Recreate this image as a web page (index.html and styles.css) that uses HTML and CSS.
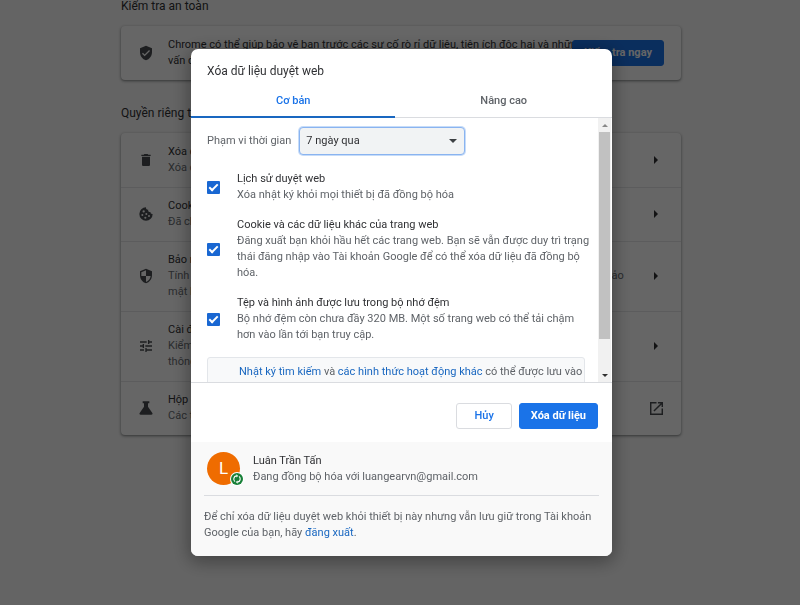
FILE: index.html
```html
<!DOCTYPE html>
<html lang="vi">
<head>
<meta charset="utf-8">
<meta name="viewport" content="width=device-width, initial-scale=1">
<title>Xóa dữ liệu duyệt web</title>
<link rel="stylesheet" href="styles.css">
</head>
<body>
<main class="page">
  <h2 class="section-title">Kiểm tra an toàn</h2>
  <section class="card">
    <div class="row">
      <svg class="row-icon" viewBox="0 0 24 24"><path d="M12 1 3 5v6c0 5.550 3.840 10.740 9 12 5.160-1.260 9-6.450 9-12V5l-9-4zm-2 16-4-4 1.410-1.410L10 14.170l6.590-6.590L18 9l-8 8z"/></svg>
      <p class="row-text">Chrome có thể giúp bảo vệ bạn trước các sự cố rò rỉ dữ liệu, tiện ích độc hại và những<br>vấn đề bảo mật khác</p>
      <button class="button primary" type="button">Kiểm tra ngay</button>
    </div>
  </section>

  <h2 class="section-title">Quyền riêng tư và bảo mật</h2>
  <section class="card">
    <div class="row">
      <svg class="row-icon" viewBox="0 0 24 24"><path d="M6 19c0 1.100.9 2 2 2h8c1.100 0 2-.9 2-2V7H6v12zM19 4h-3.500l-1-1h-5l-1 1H5v2h14V4z"/></svg>
      <p class="row-text">Xóa dữ liệu duyệt web<br><span class="muted">Xóa cookie, bộ nhớ đệm và nội dung khác</span></p>
      <svg class="arrow" viewBox="0 0 5 10"><path d="M0 0l5 5-5 5z"/></svg>
    </div>
    <div class="row">
      <svg class="row-icon" viewBox="0 0 24 24"><path fill-rule="evenodd" d="M12 2a10 10 0 1 0 10 10c-2 .4-3.500-1-3.300-2.900-2.300.4-4-1.300-3.400-3.600C13 5.700 11.600 4 12 2zM8.500 6.500a1.700 1.700 0 1 1 0 3.400 1.700 1.700 0 0 1 0-3.400zM6.500 12a1.500 1.500 0 1 1 0 3 1.500 1.500 0 0 1 0-3zM12.500 10.500a1.500 1.500 0 1 1 0 3 1.500 1.500 0 0 1 0-3zM11 16a1.600 1.600 0 1 1 0 3.200 1.600 1.600 0 0 1 0-3.200zM16.500 13.500a1.500 1.500 0 1 1 0 3 1.500 1.500 0 0 1 0-3z"/></svg>
      <p class="row-text">Cookie và các dữ liệu khác của trang web<br><span class="muted">Đã chặn cookie của bên thứ ba ở chế độ Ẩn danh</span></p>
      <svg class="arrow" viewBox="0 0 5 10"><path d="M0 0l5 5-5 5z"/></svg>
    </div>
    <div class="row">
      <svg class="row-icon" viewBox="0 0 24 24"><path d="M12 1 3 5v6c0 5.550 3.840 10.740 9 12 5.160-1.260 9-6.450 9-12V5l-9-4zm0 10.990h7c-.53 4.120-3.280 7.790-7 8.940V12H5V6.300l7-3.110v8.800z"/></svg>
      <p class="row-text">Bảo mật<br><span class="muted">Tính năng Duyệt web an toàn (bảo vệ khỏi các trang web nguy hiểm), các tùy chọn cài đặt bảo<br>mật khác</span></p>
      <svg class="arrow" viewBox="0 0 5 10"><path d="M0 0l5 5-5 5z"/></svg>
    </div>
    <div class="row">
      <svg class="row-icon" viewBox="0 0 24 24"><path d="M3 17v2h6v-2H3zM3 5v2h10V5H3zm10 16v-2h8v-2h-8v-2h-2v6h2zM7 9v2H3v2h4v2h2V9H7zm14 4v-2H11v2h10zm-6-4h2V7h4V5h-4V3h-2v6z"/></svg>
      <p class="row-text">Cài đặt trang web<br><span class="muted">Kiểm soát những thông tin mà các trang web có thể sử dụng và hiển thị (vị trí, máy ảnh và<br>thông tin khác)</span></p>
      <svg class="arrow" viewBox="0 0 5 10"><path d="M0 0l5 5-5 5z"/></svg>
    </div>
    <div class="row">
      <svg class="row-icon" viewBox="0 0 24 24"><path d="M7 2h10v3h-2v5l6.500 9.500c.8 1.300 0 2.500-1.500 2.500H4c-1.500 0-2.300-1.200-1.500-2.500L9 10V5H7z"/></svg>
      <p class="row-text">Hộp cát về quyền riêng tư<br><span class="muted">Các tính năng dùng thử đang bật</span></p>
      <svg class="external" viewBox="0 0 18 18"><path d="M16 16H2V2h7V0H0v18h18V9h-2v7zM11 0v2h3.590l-9.830 9.830 1.410 1.410L16 3.410V7h2V0h-7z"/></svg>
    </div>
  </section>
</main>

<div class="backdrop">
  <div class="dialog" role="dialog" aria-modal="true" aria-labelledby="dialog-title">
    <h1 class="dialog-title" id="dialog-title">Xóa dữ liệu duyệt web</h1>
    <div class="tabs" role="tablist">
      <button class="tab selected" type="button" role="tab" aria-selected="true">Cơ bản</button>
      <button class="tab" type="button" role="tab" aria-selected="false">Nâng cao</button>
    </div>
    <div class="scroll-area">
      <form class="options">
        <div class="range">
          <label for="range">Phạm vi thời gian</label>
          <div class="select-wrap">
            <select id="range"><option>7 ngày qua</option></select>
            <svg class="caret" viewBox="0 0 8 4"><path d="M0 0h8L4 4z"/></svg>
          </div>
        </div>
        <label class="option">
          <input type="checkbox" checked>
          <span><span class="strong">Lịch sử duyệt web</span><br>Xóa nhật ký khỏi mọi thiết bị đã đồng bộ hóa</span>
        </label>
        <label class="option">
          <input type="checkbox" checked>
          <span><span class="strong">Cookie và các dữ liệu khác của trang web</span><br>Đăng xuất bạn khỏi hầu hết các trang web. Bạn sẽ vẫn được duy trì trạng thái đăng nhập vào Tài khoản Google để có thể xóa dữ liệu đã đồng bộ hóa.</span>
        </label>
        <label class="option">
          <input type="checkbox" checked>
          <span><span class="strong">Tệp và hình ảnh được lưu trong bộ nhớ đệm</span><br>Bộ nhớ đệm còn chưa đầy 320 MB. Một số trang web có thể tải chậm hơn vào lần tới bạn truy cập.</span>
        </label>
        <p class="note"><a href="#">Nhật ký tìm kiếm</a> và <a href="#">các hình thức hoạt động khác</a> có thể được lưu vào</p>
      </form>
      <div class="scrollbar" aria-hidden="true">
        <svg class="scroll-arrow up" viewBox="0 0 6 3"><path d="M0 3h6L3 0z"/></svg>
        <div class="thumb"></div>
        <svg class="scroll-arrow" viewBox="0 0 6 3"><path d="M0 0h6L3 3z"/></svg>
      </div>
    </div>
    <div class="actions">
      <button class="button" type="button">Hủy</button>
      <button class="button primary" type="button">Xóa dữ liệu</button>
    </div>
    <footer class="account">
      <div class="profile">
        <div class="avatar">L
          <svg class="sync" viewBox="0 0 14 14"><circle cx="7" cy="7" r="7" fill="#fff"/><circle cx="7" cy="7" r="6" fill="#188038"/><path d="M5 9.600A3.200 3.200 0 0 1 6.500 3.900M9 4.400a3.200 3.200 0 0 1-1.500 5.700" fill="none" stroke="#fff" stroke-width="1.100"/><path d="M6.300 2.300v3.200L8.200 3.900zM7.700 8.500v3.200L5.800 10.100z" fill="#fff"/></svg>
        </div>
        <p><span class="strong">Luân Trần Tấn</span><br>Đang đồng bộ hóa với luangearvn@gmail.com</p>
      </div>
      <p class="signout">Để chỉ xóa dữ liệu duyệt web khỏi thiết bị này nhưng vẫn lưu giữ trong Tài khoản Google của bạn, hãy <a href="#">đăng xuất</a>.</p>
    </footer>
  </div>
</div>
</body>
</html>
```
FILE: styles.css
```css
*, ::after { box-sizing: border-box; }

body {
  margin: 0;
  height: 100vh;
  padding-left: 2px;
  overflow: hidden;
  background: #fafafa;
  color: #5f6368;
  font: 11px/16px Roboto, sans-serif;
}

h1, h2, p { margin: 0; font-weight: 400; }
button, select { font: inherit; }
a { color: #1967c0; text-decoration: none; }

.page {
  width: 90%;
  max-width: 560px;
  margin: 0 auto;
}

.section-title {
  padding-bottom: 14px;
  color: #303134;
  font-size: 12px;
  line-height: 12px;
}

.card + .section-title { padding-top: 27px; }

.card {
  border-radius: 4px;
  background: #fefefe;
  box-shadow: 0 1px 2px rgba(60, 64, 67, .4), 0 1px 3px 1px rgba(60, 64, 67, .2);
}

.row {
  display: flex;
  align-items: center;
  padding: 11px 17px;
}

.row + .row {
  padding-top: 10px;
  border-top: 1px solid #e6e7e9;
}

.row-icon {
  flex: none;
  width: 16px;
  height: 16px;
  margin-right: 14px;
  fill: #4a4d51;
}

.row-text {
  flex: 1;
  min-width: 0;
  color: #303134;
  white-space: nowrap;
}

.muted { color: #6b6f74; }

.arrow {
  width: 4px;
  height: 8px;
  margin-right: 6px;
  fill: #303134;
}

.external {
  width: 13px;
  height: 13px;
  margin-right: 1px;
  fill: #4a4d51;
}

.button {
  flex: none;
  height: 26px;
  padding: 0 17px;
  border: 1px solid #dadce0;
  border-radius: 3px;
  background: #fff;
  color: #1a73e8;
  font-weight: 500;
  white-space: nowrap;
}

.button.primary {
  padding: 0 11px;
  border-color: #1a73e8;
  background: #1a73e8;
  color: #fff;
  font-weight: 700;
}

.backdrop {
  position: fixed;
  inset: 0;
  display: flex;
  align-items: center;
  justify-content: center;
  padding-left: 3px;
  background: rgba(0, 0, 0, .6);
}

.dialog {
  width: 421px;
  max-width: 100%;
  overflow: hidden;
  border-radius: 7px;
  background: #fff;
  box-shadow: 0 4px 18px 2px rgba(0, 0, 0, .35);
}

.dialog-title {
  padding: 13px 16px 0;
  color: #303134;
  font-size: 12px;
  line-height: 18px;
}

.tabs {
  display: grid;
  grid-template-columns: 17fr 18fr;
}

.tab {
  padding: 13px 0 8px;
  border: 0;
  border-bottom: 1px solid #dadce0;
  background: none;
  color: #5f6368;
  font-weight: 500;
}

.tab.selected {
  padding-bottom: 7px;
  border-bottom: 2px solid #1967c0;
  color: #1a73e8;
}

.scroll-area {
  display: flex;
  max-height: 265px;
  padding-right: 1px;
  overflow: hidden;
  border-bottom: 1px solid #dadce0;
}

.options {
  flex: 1;
  min-width: 0;
  display: flex;
  flex-direction: column;
  gap: 14px;
  padding: 9px 8px 0 16px;
}

.range {
  display: flex;
  align-items: center;
  gap: 8px;
  padding-bottom: 2px;
}

.select-wrap { position: relative; }

.select-wrap select {
  display: block;
  width: 166px;
  height: 28px;
  padding: 0 6px;
  appearance: none;
  border: 1px solid #8ab4f0;
  border-radius: 4px;
  background: #f1f3f4;
  color: #303134;
  box-shadow: 0 0 0 1px rgba(26, 115, 232, .25);
}

.caret {
  position: absolute;
  top: 12px;
  right: 8px;
  width: 8px;
  height: 4px;
  fill: #3c4043;
}

.option {
  display: flex;
  align-items: center;
  gap: 17px;
}

.option input {
  flex: none;
  display: grid;
  place-items: center;
  width: 13px;
  height: 13px;
  margin: 0;
  appearance: none;
  border: 2px solid #5f6368;
  border-radius: 1px;
}

.option input:checked {
  border: 0;
  background: #1967d2;
}

.option input:checked::after {
  content: "";
  width: 5px;
  height: 9px;
  margin-bottom: 2px;
  border: solid #fff;
  border-width: 0 2px 2px 0;
  transform: rotate(45deg);
}

.strong { color: #303134; }

.note {
  margin-right: 5px;
  padding: 6px 3px 6px 31px;
  border: 1px solid #e3e6ea;
  border-radius: 3px;
  background: #f8f9fa;
  white-space: nowrap;
}

.scrollbar {
  flex: none;
  display: flex;
  flex-direction: column;
  align-items: center;
  gap: 5px;
  width: 13px;
  padding: 6px 0 5px;
  background: #f1f1f1;
}

.scroll-arrow {
  flex: none;
  width: 6px;
  height: 3px;
  fill: #303030;
}

.scroll-arrow.up { fill: #888; }

.thumb {
  width: 11px;
  height: 82%;
  margin-bottom: auto;
  background: #c1c1c1;
}

.actions {
  display: flex;
  justify-content: flex-end;
  gap: 7px;
  padding: 20px 14px 13px;
}

.account {
  padding: 10px 13px 15px;
  background: #f9f9f9;
}

.profile {
  display: flex;
  align-items: center;
  gap: 13px;
  padding: 0 3px 10px;
  border-bottom: 1px solid #dadce0;
}

.avatar {
  position: relative;
  width: 33px;
  height: 33px;
  border-radius: 50%;
  background: #ef6c00;
  color: #fff;
  font-size: 17px;
  line-height: 33px;
  text-align: center;
}

.sync {
  position: absolute;
  right: -4px;
  bottom: -1px;
  width: 14px;
  height: 14px;
}

.signout { padding-top: 13px; }
```
